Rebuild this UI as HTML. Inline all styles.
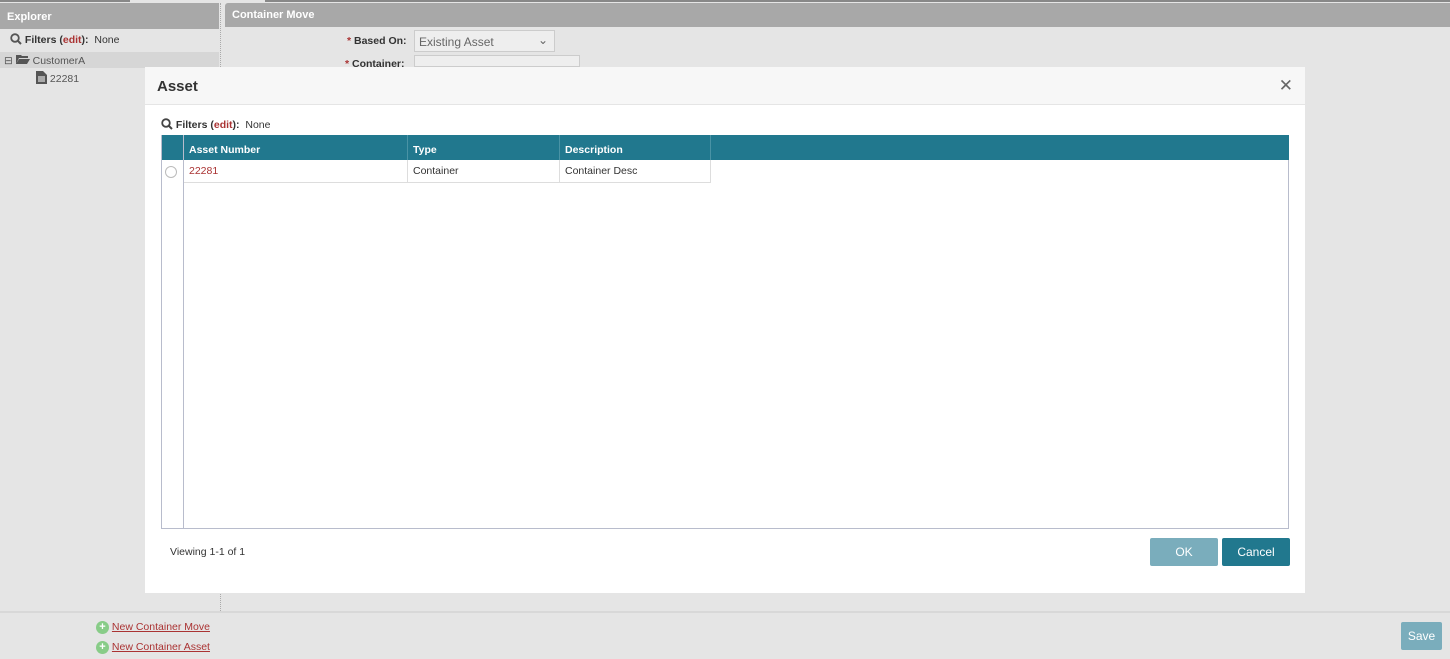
<!DOCTYPE html>
<html><head><meta charset="utf-8"><style>
*{margin:0;padding:0;box-sizing:border-box}
body{width:1450px;height:659px;background:#e5e5e5;font-family:"Liberation Sans",sans-serif;font-size:10.5px;color:#333;position:relative;overflow:hidden}
.abs{position:absolute}
.hdr{background:#a8a8a8;color:#fff;font-weight:bold;font-size:11px;padding-left:7px}
.plus{display:inline-block;width:13px;height:13px;border-radius:50%;background:#8c8;vertical-align:middle;color:#fff;font-size:11px;line-height:13px;text-align:center;font-weight:bold}
</style></head><body>
<div class="abs" style="left:0;top:0;width:130px;height:2px;background:#888"></div>
<div class="abs" style="left:265px;top:0;width:1185px;height:2px;background:#888"></div>
<div class="abs hdr" style="left:0;top:3px;width:219px;height:26px;line-height:28px">Explorer</div>
<div class="abs hdr" style="left:225px;top:3px;width:1225px;height:24px;line-height:24px;border-radius:3px 0 0 0">Container Move</div>
<div class="abs" style="left:220px;top:3px;height:610px;border-left:1px dotted #aaa"></div>
<div class="abs" style="left:10px;top:33px;color:#333">
<svg width="12" height="12" style="vertical-align:-2px"><circle cx="5" cy="5" r="3.8" stroke="#555" stroke-width="1.8" fill="none"/><path d="M8 8l3 3" stroke="#555" stroke-width="2"/></svg> <b>Filters (<span style="color:#a33">edit</span>):</b>&nbsp; None</div>
<div class="abs" style="left:0;top:52px;width:219px;height:16px;background:#d6d6d6"></div>
<div class="abs" style="left:4px;top:54px;color:#555">⊟ <svg width="14" height="10"><path d="M0 1h5l1 1h6v2H3L0 10z M3 5h11l-3 5H0z" fill="#555"/></svg> CustomerA</div>
<div class="abs" style="left:36px;top:71px;color:#555"><svg width="11" height="13" style="vertical-align:-2px"><path d="M0 0h7l4 4v9H0z" fill="#555"/><path d="M2 6h7M2 8h7M2 10h7" stroke="#fff"/></svg> 22281</div>
<div class="abs" style="left:347px;top:35px;font-weight:bold"><span style="color:#a33">*</span> Based On:</div>
<div class="abs" style="left:414px;top:30px;width:141px;height:22px;border:1px solid #ccc;background:#eee;color:#666;font-size:12px;padding:4px">Existing Asset<span style="position:absolute;right:6px;top:2px">⌄</span></div>
<div class="abs" style="left:345px;top:58px;font-weight:bold"><span style="color:#a33">*</span> Container:</div>
<div class="abs" style="left:414px;top:55px;width:166px;height:12px;border:1px solid #ccc;background:#eee"></div>
<div class="abs" style="left:0;top:611px;width:1450px;border-top:2px solid #d8d8d8"></div>
<div class="abs" style="left:96px;top:620px;color:#a33;line-height:14px"><span class="plus">+</span> <u>New Container Move</u></div>
<div class="abs" style="left:96px;top:640px;color:#a33;line-height:14px"><span class="plus">+</span> <u>New Container Asset</u></div>
<div class="abs" style="left:1401px;top:622px;width:41px;height:28px;background:#7aadbc;color:#fff;font-size:12px;text-align:center;line-height:28px;border-radius:2px">Save</div>

<div class="abs" style="left:145px;top:67px;width:1160px;height:526px;background:#fff">
<div style="height:38px;background:#f7f7f7;border-bottom:1px solid #e5e5e5;font-size:15px;font-weight:bold;padding:11px 12px;color:#333">Asset<span style="position:absolute;right:12px;top:9px;font-weight:normal;font-size:17px;color:#666">✕</span></div>
<div class="abs" style="left:16px;top:51px"><svg width="12" height="12" style="vertical-align:-2px"><circle cx="5" cy="5" r="3.8" stroke="#444" stroke-width="1.8" fill="none"/><path d="M8 8l3 3" stroke="#444" stroke-width="2"/></svg> <b>Filters (<span style="color:#a33">edit</span>):</b>&nbsp; None</div>
<div class="abs" style="left:16px;top:68px;width:1128px;height:394px;border:1px solid #b8bccc;border-top:none">
<div class="abs" style="left:0;top:0;width:1127px;height:25px;background:#21788e"></div>
<div class="abs" style="left:21px;top:0;height:393px;border-left:1px solid #b8bccc"></div>
<div class="abs" style="left:22px;top:0;width:224px;height:25px;border-right:1px solid #4a93a5;color:#fff;font-weight:bold;padding:9px 5px 0">Asset Number</div>
<div class="abs" style="left:246px;top:0;width:152px;height:25px;border-right:1px solid #4a93a5;color:#fff;font-weight:bold;padding:9px 5px 0">Type</div>
<div class="abs" style="left:398px;top:0;width:151px;height:25px;border-right:1px solid #4a93a5;color:#fff;font-weight:bold;padding:9px 5px 0">Description</div>
<div class="abs" style="left:3px;top:31px;width:12px;height:12px;border:1px solid #bbb;border-radius:50%"></div>
<div class="abs" style="left:22px;top:25px;width:224px;height:23px;border-right:1px solid #ddd;border-bottom:1px solid #ddd;color:#a33;padding:5px 5px">22281</div>
<div class="abs" style="left:246px;top:25px;width:152px;height:23px;border-right:1px solid #ddd;border-bottom:1px solid #ddd;padding:5px 5px">Container</div>
<div class="abs" style="left:398px;top:25px;width:151px;height:23px;border-right:1px solid #ddd;border-bottom:1px solid #ddd;padding:5px 5px">Container Desc</div>
</div>
<div class="abs" style="left:25px;top:479px">Viewing 1-1 of 1</div>
<div class="abs" style="left:1005px;top:471px;width:68px;height:28px;background:#7aadbc;color:#fff;font-size:12px;text-align:center;line-height:28px;border-radius:2px">OK</div>
<div class="abs" style="left:1077px;top:471px;width:68px;height:28px;background:#21788e;color:#fff;font-size:12px;text-align:center;line-height:28px;border-radius:2px">Cancel</div>
</div>
</body></html>
